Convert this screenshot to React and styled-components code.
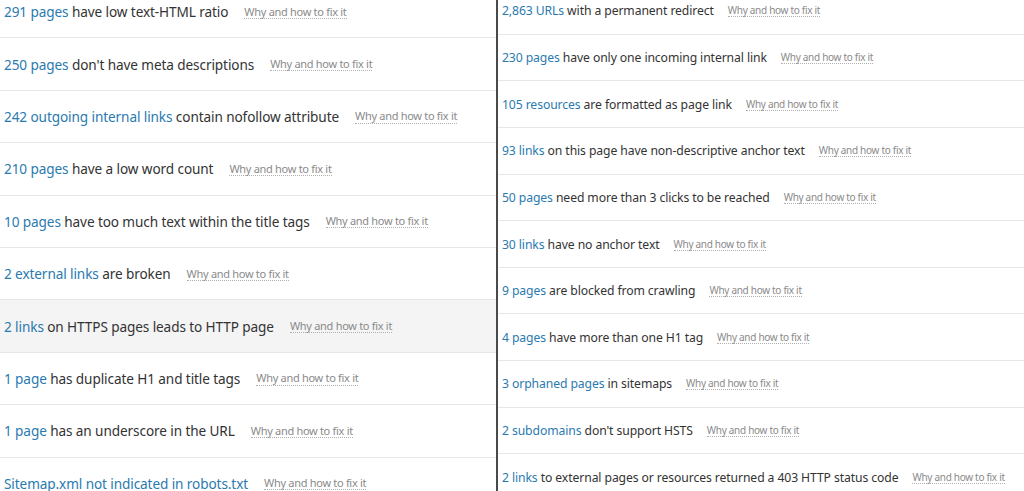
import React from 'react';
import styled, { createGlobalStyle } from 'styled-components';

const Global = createGlobalStyle`
  body { margin: 0; background: #fff; font-family: "Noto Sans", "Open Sans", sans-serif; overflow: hidden; }
`;

const left = [
  ['291 pages', ' have low text-HTML ratio'],
  ['250 pages', " don't have meta descriptions"],
  ['242 outgoing internal links', ' contain nofollow attribute'],
  ['210 pages', ' have a low word count'],
  ['10 pages', ' have too much text within the title tags'],
  ['2 external links', ' are broken'],
  ['2 links', ' on HTTPS pages leads to HTTP page', true],
  ['1 page', ' has duplicate H1 and title tags'],
  ['1 page', ' has an underscore in the URL'],
  ['Sitemap.xml not indicated in robots.txt', ''],
];

const right = [
  ['2,863 URLs', ' with a permanent redirect'],
  ['230 pages', ' have only one incoming internal link'],
  ['105 resources', ' are formatted as page link'],
  ['93 links', ' on this page have non-descriptive anchor text'],
  ['50 pages', ' need more than 3 clicks to be reached'],
  ['30 links', ' have no anchor text'],
  ['9 pages', ' are blocked from crawling'],
  ['4 pages', ' have more than one H1 tag'],
  ['3 orphaned pages', ' in sitemaps'],
  ['2 subdomains', " don't support HSTS"],
  ['2 links', ' to external pages or resources returned a 403 HTTP status code'],
];

const Page = styled.div`
  display: flex;
  height: 491px;
  overflow: hidden;
`;

const Column = styled.div`
  width: ${p => p.w}px;
  flex-shrink: 0;
  margin-top: ${p => p.offset}px;
`;

const Divider = styled.div`
  width: 2px;
  background: #4a4a4a;
  flex-shrink: 0;
`;

const Row = styled.div`
  height: ${p => p.h}px;
  box-sizing: border-box;
  display: flex;
  align-items: center;
  padding-left: ${p => p.pad}px;
  border-bottom: 1px solid #e6e6e6;
  background: ${p => (p.active ? '#f4f4f4' : '#fff')};
  font-size: ${p => p.size}px;
  letter-spacing: -0.1px;
  color: #333;
  white-space: pre;
`;

const Count = styled.span`
  color: #2a7ab0;
`;

const Fix = styled.span`
  margin-left: ${p => p.gap}px;
  font-size: ${p => p.size}px;
  color: #8a8a8a;
  letter-spacing: -0.3px;
  border-bottom: 1px dotted #b0b0b0;
  line-height: 1.2;
`;

const List = ({ items, h, size, fixSize, gap, pad }) =>
  items.map(([a, b, active], i) => (
    <Row key={i} h={h} size={size} pad={pad} active={active}>
      <span>
        <Count>{a}</Count>
        {b}
      </span>
      <Fix size={fixSize} gap={gap}>Why and how to fix it</Fix>
    </Row>
  ));

export default function App() {
  return (
    <Page>
      <Global />
      <Column w={496} offset={-14}>
        <List items={left} h={52.4} size={13.6} fixSize={11} gap={16} pad={4} />
      </Column>
      <Divider />
      <Column w={526} offset={-12}>
        <List items={right} h={46.65} size={12.2} fixSize={10} gap={14} pad={4} />
      </Column>
    </Page>
  );
}
